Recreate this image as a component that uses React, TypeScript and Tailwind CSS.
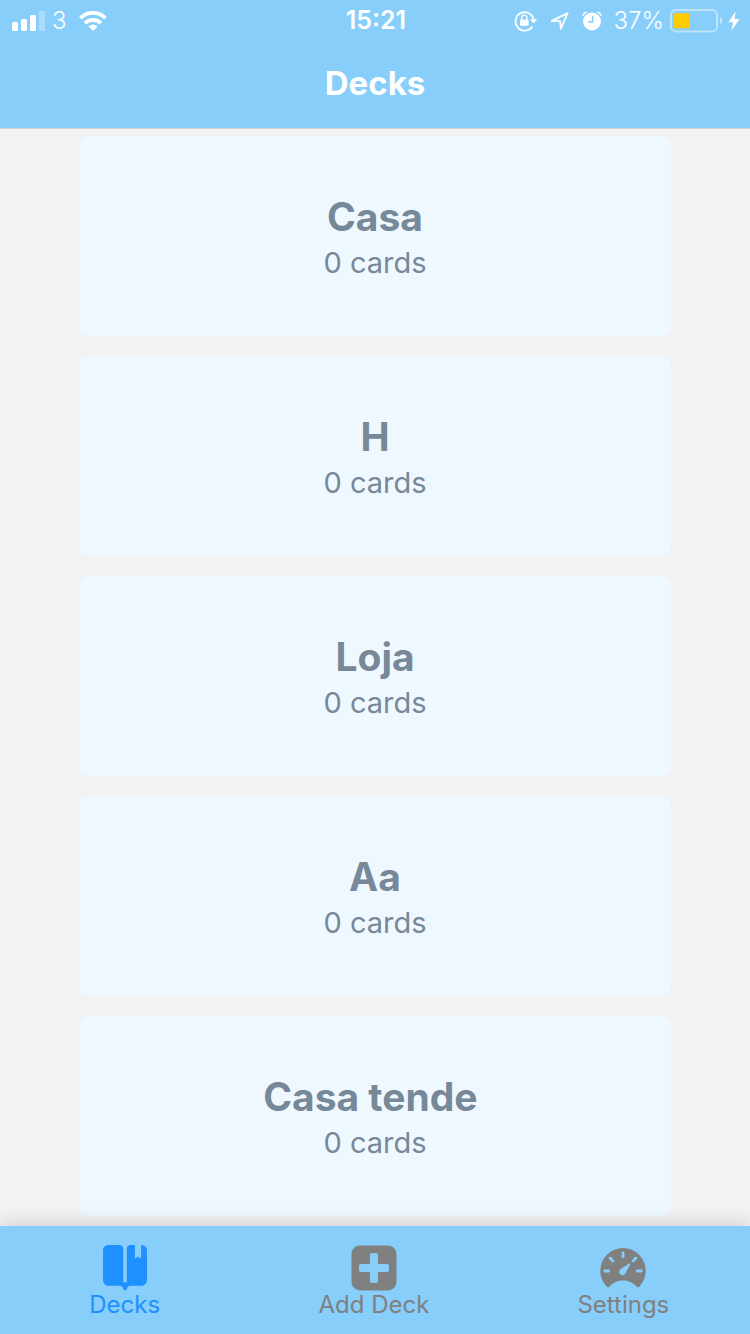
import type { ReactNode } from "react";

type Deck = { title: string; cards: number };

const decks: Deck[] = [
  { title: "Casa", cards: 0 },
  { title: "H", cards: 0 },
  { title: "Loja", cards: 0 },
  { title: "Aa", cards: 0 },
  { title: "Casa tende ", cards: 0 },
];

function SignalIcon() {
  return (
    <svg width="34" height="20" viewBox="0 0 34 20" fill="#fff" aria-hidden="true">
      <rect x="0" y="11" width="6" height="9" rx="1.5" />
      <rect x="9" y="8" width="6" height="12" rx="1.5" />
      <rect x="18" y="4" width="6" height="16" rx="1.5" />
      <rect x="27" y="0" width="6" height="20" rx="1.5" opacity="0.3" />
    </svg>
  );
}

function WifiIcon() {
  return (
    <svg width="28" height="20" viewBox="0 0 28 20" aria-hidden="true">
      <g fill="none" stroke="#fff" strokeWidth="3.8">
        <path d="M1.4 7.1A17.8 17.8 0 0 1 26.6 7.1" />
        <path d="M6 12.1A11.3 11.3 0 0 1 22 12.1" />
      </g>
      <path d="M9.4 15.4A6.6 6.6 0 0 1 18.6 15.4L14 20Z" fill="#fff" />
    </svg>
  );
}

function RotationLockIcon() {
  return (
    <svg width="24" height="22" viewBox="0 0 24 22" aria-hidden="true">
      <path d="M18.3 16.6A9.2 9.2 0 1 1 19.6 9.2" fill="none" stroke="#fff" strokeWidth="1.8" />
      <path d="M15.8 9.2H23.2L19.5 13.6Z" fill="#fff" />
      <rect x="6" y="9.5" width="8.6" height="6.3" rx="0.8" fill="#fff" />
      <path d="M7.8 10V7.4A2.5 2.5 0 0 1 12.8 7.4V10" fill="none" stroke="#fff" strokeWidth="1.4" />
    </svg>
  );
}

function LocationIcon() {
  return (
    <svg width="20" height="20" viewBox="0 0 20 20" aria-hidden="true">
      <path
        d="M1.8 9.9L17.7 2.1L10.8 17.7L10.1 10.1Z"
        fill="none"
        stroke="#fff"
        strokeWidth="1.8"
        strokeLinejoin="round"
      />
    </svg>
  );
}

function AlarmIcon() {
  return (
    <svg width="20" height="20" viewBox="0 0 20 20" aria-hidden="true">
      <circle cx="10" cy="10.4" r="9" fill="#fff" />
      <path d="M0.8 4.6A6 6 0 0 1 4.8 1M15.2 1A6 6 0 0 1 19.2 4.6" fill="none" stroke="#fff" strokeWidth="1.8" />
      <path d="M10.6 5V11H6.2" fill="none" stroke="#87cefa" strokeWidth="1.5" />
    </svg>
  );
}

function BatteryIcon() {
  return (
    <svg width="54" height="24" viewBox="0 0 54 24" aria-hidden="true">
      <rect x="1" y="1" width="46" height="21.5" rx="5" fill="none" stroke="#fff" strokeOpacity="0.45" strokeWidth="2" />
      <path d="M50 8A4.2 4.2 0 0 1 50 15.6Z" fill="#fff" fillOpacity="0.45" />
      <rect x="4" y="4.3" width="16" height="15" rx="1" fill="#ffcc00" />
    </svg>
  );
}

function BoltIcon() {
  return (
    <svg width="12" height="20" viewBox="0 0 12 20" fill="#fff" aria-hidden="true">
      <path d="M7.5 0.4L0.4 11.2H5L3.6 19.5L11.6 8H6.6Z" />
    </svg>
  );
}

function DecksIcon() {
  return (
    <svg width="44" height="46" viewBox="0 0 44 46" fill="currentColor" aria-hidden="true">
      <path d="M5.5 0H16C18.8 0 20.2 1.6 20.2 4V37.2H23.8V4C23.8 1.6 25.2 0 28 0H31.9V12.6Q31.9 13.8 33 13L34.9 11.4L36.9 13Q38.1 13.8 38.1 12.6V0C41.6 0 44 2.4 44 5.5V35C44 38.4 41.6 40.8 38.4 40.8H27.5C25.2 40.8 24.4 42.2 23.6 44.2Q22 47 20.4 44.2C19.6 42.2 18.8 40.8 16.5 40.8H5.6C2.4 40.8 0 38.4 0 35V5.5C0 2.4 2.4 0 5.5 0Z" />
    </svg>
  );
}

function AddIcon() {
  return (
    <svg width="46" height="46" viewBox="0 0 46 46" aria-hidden="true">
      <rect x="0.5" y="0.5" width="45" height="45" rx="8.5" fill="currentColor" />
      <rect x="19" y="8" width="8" height="30" rx="2" fill="#87cefa" />
      <rect x="8" y="19" width="30" height="8" rx="2" fill="#87cefa" />
    </svg>
  );
}

function SettingsIcon() {
  return (
    <svg width="46" height="40" viewBox="0 0 46 40" aria-hidden="true">
      <path
        d="M8.6 39.2Q7.6 39.8 6.6 38.6C2.4 34.2 0.3 28.8 0.3 22.8A22.7 22.7 0 0 1 45.7 22.8C45.7 28.8 43.6 34.2 39.4 38.6Q38.4 39.8 37.4 39.2C33.6 34.8 28.6 32.4 23 32.4S12.4 34.8 8.6 39.2Z"
        fill="currentColor"
      />
      <g stroke="#87cefa" strokeWidth="2.8" strokeLinecap="round">
        <path d="M4.8 23H8.8M37.2 23H41.2M23 4.8V8.8M10.1 10.1L12.9 12.9M33.1 12.9L35.9 10.1" />
      </g>
      <path d="M30.2 16.6L25.9 24.3A3.4 3.4 0 1 1 21.1 20.7L29 15.6Q30.8 15 30.2 16.6Z" fill="#87cefa" />
    </svg>
  );
}

function StatusBar() {
  return (
    <div className="grid h-10 grid-cols-[1fr_auto_1fr] items-center pl-3 pr-2.5 pt-0.5 text-2xl">
      <div className="flex items-center">
        <SignalIcon />
        <span className="ml-1.5 mr-3 font-light">3</span>
        <WifiIcon />
      </div>
      <time className="text-[25px] font-semibold">15:21</time>
      <div className="flex items-center justify-end">
        <RotationLockIcon />
        <span className="ml-3">
          <LocationIcon />
        </span>
        <span className="mx-3">
          <AlarmIcon />
        </span>
        <span className="mr-1.5 font-light">37%</span>
        <BatteryIcon />
        <span className="ml-1">
          <BoltIcon />
        </span>
      </div>
    </div>
  );
}

function DeckCard({ title, cards }: Deck) {
  return (
    <li>
      <button
        type="button"
        className="flex h-[200px] w-full flex-col items-center justify-center rounded-[10px] bg-[#f0f8ff] pt-1.5 text-[#778899]"
      >
        <span className="whitespace-pre text-[39px] font-bold leading-12">{title}</span>
        <span className="text-[29px] leading-11">{cards} cards</span>
      </button>
    </li>
  );
}

function Tab({ label, icon, active }: { label: string; icon: ReactNode; active?: boolean }) {
  return (
    <a
      href={"#" + label.toLowerCase().replace(" ", "-")}
      aria-current={active ? "page" : undefined}
      className={
        "flex flex-1 flex-col items-center justify-end pb-[15px] " + (active ? "text-[#1e90ff]" : "text-[#808080]")
      }
    >
      <span className="flex h-[46px] items-center">{icon}</span>
      <span className="text-2xl leading-7">{label}</span>
    </a>
  );
}

export default function App() {
  return (
    <div className="flex min-h-screen flex-col bg-[#f2f2f2] font-['Inter','Liberation_Sans',sans-serif]">
      <header className="border-b border-[#cfd3d6] bg-[#87cefa] text-white">
        <StatusBar />
        <h1 className="flex h-22 items-center justify-center text-[33px] font-bold">Decks</h1>
      </header>
      <main className="flex-1 pb-2.5 pt-[7px]">
        <ul className="mx-auto flex w-[79%] flex-col gap-5">
          {decks.map((deck) => (
            <DeckCard key={deck.title} title={deck.title} cards={deck.cards} />
          ))}
        </ul>
      </main>
      <nav className="relative flex h-27 bg-[#87cefa] pr-0.5 shadow-[0_0_20px_rgba(0,0,0,0.18)]">
        <Tab label="Decks" icon={<DecksIcon />} active />
        <Tab label="Add Deck" icon={<AddIcon />} />
        <Tab label="Settings" icon={<SettingsIcon />} />
      </nav>
    </div>
  );
}
